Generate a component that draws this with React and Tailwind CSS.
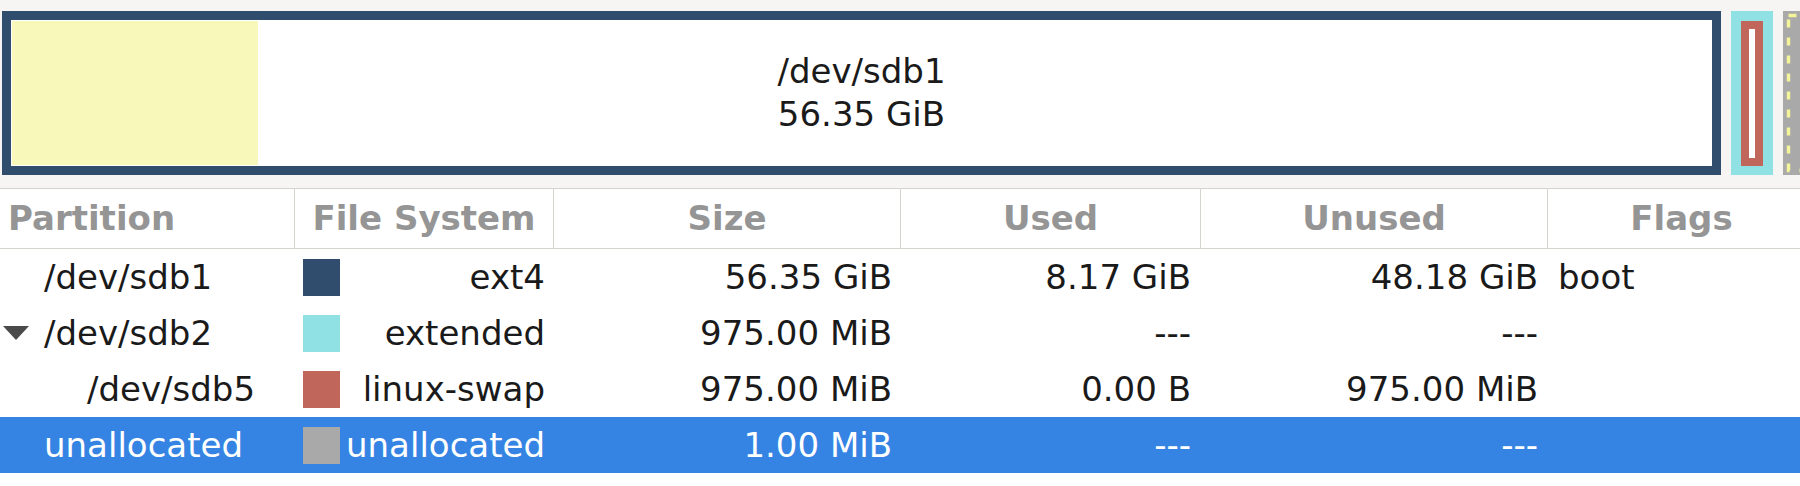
import React from 'react';

const rows = [
  { name: '/dev/sdb1', indent: 'pl-[44px]', color: 'bg-[#304d6d]', fs: 'ext4', size: '56.35 GiB', used: '8.17 GiB', unused: '48.18 GiB', flags: 'boot' },
  { name: '/dev/sdb2', indent: 'pl-[3px]', expander: true, color: 'bg-[#8fe1e3]', fs: 'extended', size: '975.00 MiB', used: '---', unused: '---', flags: '' },
  { name: '/dev/sdb5', indent: 'pl-[87px]', color: 'bg-[#c1665a]', fs: 'linux-swap', size: '975.00 MiB', used: '0.00 B', unused: '975.00 MiB', flags: '' },
  { name: 'unallocated', indent: 'pl-[44px]', color: 'bg-[#a9a9a9]', fs: 'unallocated', size: '1.00 MiB', used: '---', unused: '---', flags: '', selected: true },
];

const cols = 'grid grid-cols-[295px_259px_347px_300px_347px_267px]';

function Expander() {
  return (
    <svg width="26" height="14" viewBox="0 0 26 14" className="mr-[15px] shrink-0">
      <polygon points="0,0 26,0 13,14" fill="#4a4a4a" />
    </svg>
  );
}

function DiskMap() {
  return (
    <div className="h-[188px] bg-[#f6f5f4] pt-[11px] pl-[2px] flex gap-[10px] overflow-hidden">
      <div className="relative w-[1719px] h-[164px] shrink-0 border-[9px] border-[#304d6d] bg-white p-[1px] flex">
        <div className="w-[246px] bg-[#f8f8ba]" />
        <div className="absolute inset-0 flex flex-col items-center justify-center text-[34px] leading-[43px] text-[#1a1a1a]">
          <span>/dev/sdb1</span>
          <span>56.35 GiB</span>
        </div>
      </div>
      <div className="w-[42px] h-[164px] shrink-0 bg-[#8fe1e3] p-[10px] pb-[9px] flex">
        <div className="flex-1 border-[8px] border-[#c1665a] bg-white" />
      </div>
      <div className="relative w-[40px] h-[164px] shrink-0 bg-[#a9a9a9]">
        <svg width="40" height="164" className="absolute inset-0">
          <rect x="5.5" y="4.5" width="40" height="155" fill="none" stroke="#f4f49a" strokeWidth="3.5" strokeDasharray="8 10" />
        </svg>
      </div>
    </div>
  );
}

export default function App() {
  return (
    <div className="w-[1800px] h-[486px] overflow-hidden bg-white font-['DejaVu_Sans',sans-serif] text-[34px] text-[#1a1a1a]">
      <DiskMap />
      <div className="w-[1815px]">
        <div className={`${cols} h-[61px] border-y border-[#d6d2ce] font-bold text-[#959595]`}>
          <div className="flex items-center pl-[8px] border-r border-[#d6d2ce]">Partition</div>
          <div className="flex items-center justify-center border-r border-[#d6d2ce]">File System</div>
          <div className="flex items-center justify-center border-r border-[#d6d2ce]">Size</div>
          <div className="flex items-center justify-center border-r border-[#d6d2ce]">Used</div>
          <div className="flex items-center justify-center border-r border-[#d6d2ce]">Unused</div>
          <div className="flex items-center justify-center">Flags</div>
        </div>
        {rows.map((r) => (
          <div
            key={r.name}
            className={`${cols} h-[56px] whitespace-nowrap ${r.selected ? 'bg-[#3584e4] text-white' : ''}`}
          >
            <div className={`flex items-center ${r.indent}`}>
              {r.expander && <Expander />}
              <span>{r.name}</span>
            </div>
            <div className="flex items-center pl-[8px] pr-[9px]">
              <div className={`w-[37px] h-[37px] shrink-0 ${r.color}`} />
              <span className="flex-1 text-right">{r.fs}</span>
            </div>
            <div className="flex items-center justify-end pr-[9px]">{r.size}</div>
            <div className="flex items-center justify-end pr-[10px]">{r.used}</div>
            <div className="flex items-center justify-end pr-[10px]">{r.unused}</div>
            <div className="flex items-center pl-[10px]">{r.flags}</div>
          </div>
        ))}
      </div>
    </div>
  );
}
